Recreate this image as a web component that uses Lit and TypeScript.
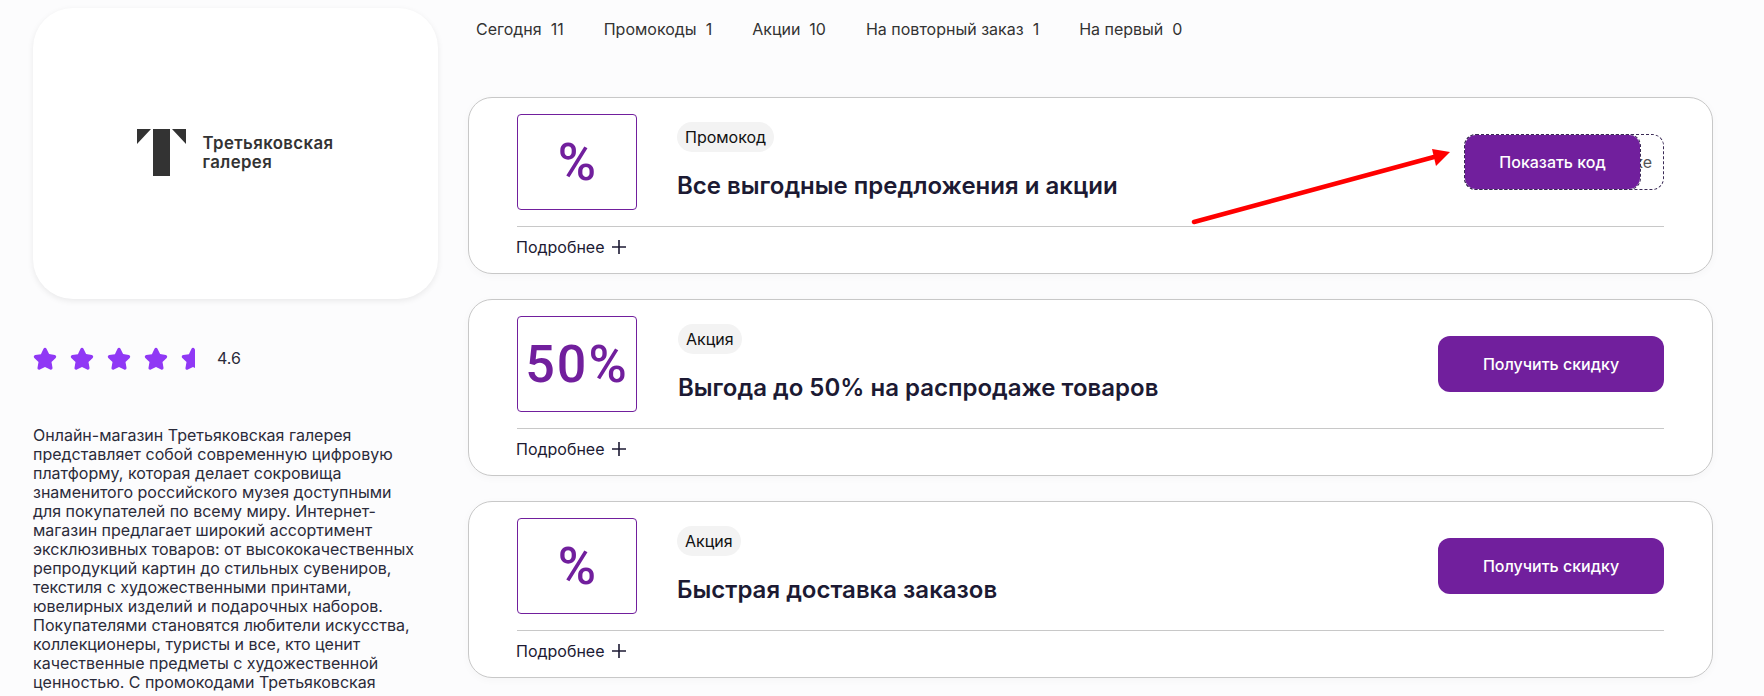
import { html, css, LitElement, svg } from "lit";
import { customElement } from "lit/decorators.js";

const tabs = [
  ["Сегодня", "11"],
  ["Промокоды", "1"],
  ["Акции", "10"],
  ["На повторный заказ", "1"],
  ["На первый", "0"],
];

const offers = [
  { mark: "%", badge: "Промокод", title: "Все выгодные предложения и акции", code: true },
  { mark: "50%", badge: "Акция", title: "Выгода до 50% на распродаже товаров", code: false },
  { mark: "%", badge: "Акция", title: "Быстрая доставка заказов", code: false },
];

const starPath = svg`<path d="M12 .8c.7 0 1.2.4 1.500 1l2.600 5.300 5.700.9c1.400.2 1.900 1.900.9 2.900l-4.200 4 1 5.800c.2 1.400-1.200 2.400-2.400 1.800L12 19.900l-5.100 2.700c-1.200.7-2.700-.4-2.400-1.800l1-5.800-4.200-4c-1-1-.5-2.700.9-2.900l5.700-.9L10.500 1.800c.3-.6.9-1 1.500-1z" />`;

@customElement("app-root")
export class AppRoot extends LitElement {
  static styles = css`
    :host {
      display: block;
      height: 696px;
      overflow: hidden;
      background: #fcfcfd;
      font-family: "Inter", "Noto Sans", sans-serif;
      color: #1c1a33;
    }
    .page {
      display: flex;
      gap: 30px;
      padding-left: 33px;
      position: relative;
    }
    .sidebar {
      width: 405px;
      flex: none;
      padding-top: 8px;
    }
    .logoCard {
      height: 291px;
      border-radius: 40px;
      background: #fff;
      box-shadow: 0 2px 6px rgba(0, 0, 0, 0.08);
      display: flex;
      align-items: center;
      justify-content: center;
      gap: 16px;
      padding: 0 0 3px 0;
      box-sizing: border-box;
    }
    .logoText {
      font-weight: 600;
      font-size: 16.8px;
      line-height: 19px;
      letter-spacing: 0.4px;
      color: #333;
      margin-top: 2px;
    }
    .rating {
      display: flex;
      align-items: center;
      margin-top: 48px;
      height: 24px;
    }
    .stars {
      display: flex;
      gap: 13px;
    }
    .stars svg {
      display: block;
      width: 24px;
      height: 24px;
      fill: #9038f5;
    }
    .score {
      margin: 0 0 2px 12px;
      font-size: 16px;
      color: #2b2b3a;
    }
    .about {
      width: 385px;
      margin: 55px 0 0;
      font-size: 16px;
      line-height: 19px;
      color: #2b2b3a;
    }
    .main {
      width: 1245px;
      flex: none;
    }
    .tabs {
      display: flex;
      gap: 40px;
      padding: 20px 0 0 8px;
      height: 97px;
      box-sizing: border-box;
      font-size: 16px;
      line-height: 19px;
      color: #333;
    }
    .tabs span span {
      margin-left: 9px;
    }
    .cards {
      display: flex;
      flex-direction: column;
      gap: 25px;
    }
    .card {
      height: 177px;
      box-sizing: border-box;
      border: 1px solid #c8c8c8;
      border-radius: 24px;
      background: #fff;
      box-shadow: 0 2px 8px rgba(0, 0, 0, 0.03);
      padding: 16px 48px 0 48px;
    }
    .row {
      display: flex;
      height: 112px;
      border-bottom: 1px solid #c8c8c8;
    }
    .mark {
      width: 120px;
      height: 96px;
      flex: none;
      box-sizing: border-box;
      border: 1px solid #711f9d;
      border-radius: 4px;
      background: #fff;
      color: #711f9d;
      font-family: "Roboto", sans-serif;
      font-size: 52px;
      font-weight: 500;
      display: flex;
      align-items: center;
      justify-content: center;
    }
    .mark.wide {
      letter-spacing: 2px;
    }
    .info {
      margin-left: 40px;
      padding-top: 8px;
    }
    .info.shifted {
      margin-left: 41px;
    }
    .badge {
      display: inline-block;
      height: 30px;
      line-height: 30px;
      padding: 0 8px;
      border-radius: 15px;
      background: #f3f3f3;
      color: #111;
      font-size: 16px;
    }
    .title {
      margin: 18px 0 0;
      font-size: 24px;
      line-height: 32px;
      font-weight: 600;
    }
    .action {
      margin: 20px 0 0 auto;
    }
    .button {
      height: 56px;
      box-sizing: border-box;
      border-radius: 12px;
      background: #711f9d;
      color: #fff;
      font-size: 16px;
      font-weight: 500;
      display: flex;
      align-items: center;
      justify-content: center;
    }
    .getButton {
      width: 226px;
    }
    .codeBox {
      position: relative;
      width: 200px;
      height: 56px;
      box-sizing: border-box;
      border: 1px dashed #3a2a55;
      border-radius: 12px;
      display: flex;
      align-items: center;
      justify-content: flex-end;
      padding-right: 11px;
      font-size: 16px;
      color: #555;
    }
    .showButton {
      position: absolute;
      left: -1px;
      top: -1px;
      width: 177px;
      border: 1px dashed #3a2a55;
      background-clip: padding-box;
    }
    .more {
      display: flex;
      align-items: center;
      gap: 7px;
      height: 40px;
      margin-left: -1px;
      font-size: 16px;
      color: #1c1a33;
    }
    .more svg {
      display: block;
      width: 14px;
      height: 14px;
      stroke: #1c1a33;
      stroke-width: 1.6;
    }
    .arrow {
      position: absolute;
      left: 1180px;
      top: 140px;
      width: 280px;
      height: 90px;
    }
  `;

  renderStars() {
    return html`<div class="stars">
      ${[1, 2, 3, 4].map(() => html`<svg viewBox="0 0 24 24">${starPath}</svg>`)}
      <svg viewBox="0 0 24 24">
        <clipPath id="part"><rect width="14" height="24" /></clipPath>
        <g clip-path="url(#part)">${starPath}</g>
      </svg>
    </div>`;
  }

  renderOffer(offer: (typeof offers)[number]) {
    const wide = offer.mark.length > 1;
    return html`<section class="card">
      <div class="row">
        <div class="mark ${wide ? "wide" : ""}">${offer.mark}</div>
        <div class="info ${wide ? "shifted" : ""}">
          <span class="badge">${offer.badge}</span>
          <h2 class="title">${offer.title}</h2>
        </div>
        <div class="action">
          ${offer.code
            ? html`<div class="codeBox">ке<div class="button showButton">Показать код</div></div>`
            : html`<div class="button getButton">Получить скидку</div>`}
        </div>
      </div>
      <div class="more">
        Подробнее
        <svg viewBox="0 0 14 14"><path d="M7 0v14M0 7h14" /></svg>
      </div>
    </section>`;
  }

  render() {
    return html`<div class="page">
      <aside class="sidebar">
        <div class="logoCard">
          <svg width="49" height="47" viewBox="0 0 49 47" fill="#333">
            <path d="M0 0h14L0 15zM16 0h17v47H16zM35 0h14v15z" />
          </svg>
          <div class="logoText">Третьяковская<br />галерея</div>
        </div>
        <div class="rating">
          ${this.renderStars()}
          <span class="score">4.6</span>
        </div>
        <p class="about">
          Онлайн-магазин Третьяковская галерея представляет собой современную цифровую платформу,
          которая делает сокровища знаменитого российского музея доступными для покупателей по всему
          миру. Интернет-магазин предлагает широкий ассортимент эксклюзивных товаров: от
          высококачественных репродукций картин до стильных сувениров, текстиля с художественными
          принтами, ювелирных изделий и подарочных наборов. Покупателями становятся любители
          искусства, коллекционеры, туристы и все, кто ценит качественные предметы с художественной
          ценностью. С промокодами Третьяковская
        </p>
      </aside>
      <main class="main">
        <nav class="tabs">
          ${tabs.map(([label, count]) => html`<span>${label}<span>${count}</span></span>`)}
        </nav>
        <div class="cards">${offers.map((offer) => this.renderOffer(offer))}</div>
      </main>
      <svg class="arrow" viewBox="0 0 280 90">
        <path d="M14 82L254 17" stroke="#f00" stroke-width="4.500" stroke-linecap="round" fill="none" />
        <path d="M270 12L252 9L256 26z" fill="#f00" />
      </svg>
    </div>`;
  }
}
